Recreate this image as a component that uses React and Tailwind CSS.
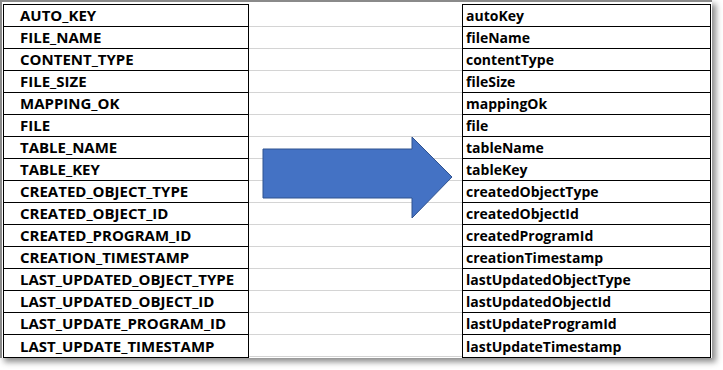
const fields = [
  ['AUTO_KEY', 'autoKey'],
  ['FILE_NAME', 'fileName'],
  ['CONTENT_TYPE', 'contentType'],
  ['FILE_SIZE', 'fileSize'],
  ['MAPPING_OK', 'mappingOk'],
  ['FILE', 'file'],
  ['TABLE_NAME', 'tableName'],
  ['TABLE_KEY', 'tableKey'],
  ['CREATED_OBJECT_TYPE', 'createdObjectType'],
  ['CREATED_OBJECT_ID', 'createdObjectId'],
  ['CREATED_PROGRAM_ID', 'createdProgramId'],
  ['CREATION_TIMESTAMP', 'creationTimestamp'],
  ['LAST_UPDATED_OBJECT_TYPE', 'lastUpdatedObjectType'],
  ['LAST_UPDATED_OBJECT_ID', 'lastUpdatedObjectId'],
  ['LAST_UPDATE_PROGRAM_ID', 'lastUpdateProgramId'],
  ['LAST_UPDATE_TIMESTAMP', 'lastUpdateTimestamp'],
];

const Arrow = () => (
  <svg
    className="absolute left-[260px] top-[134px]"
    width="192"
    height="84"
    viewBox="0 0 192 84"
  >
    <polygon
      points="1,13 150,13 150,1 190,41 150,82 150,62 1,62"
      fill="#4472c4"
      stroke="#2f528f"
      strokeWidth="1"
    />
  </svg>
);

const App = () => {
  return (
    <div className="w-[723px] h-[370px] bg-white overflow-hidden font-['Open_Sans',Arial,sans-serif] font-bold text-black">
      <div className="relative w-[712px] h-[358px] border-t-2 border-l-2 border-[#8a8a8a] bg-white pt-[2px] pl-[1px] shadow-[4px_4px_6px_rgba(0,0,0,0.45)]">
        <div className="flex">
          <div className="w-[246px] border border-black text-[15px]">
            {fields.map(([col], i) => (
              <div
                key={col}
                className={`h-[22px] flex items-center pl-[16px] ${i < fields.length - 1 ? 'border-b border-black' : 'h-[21px]'}`}
              >
                {col}
              </div>
            ))}
          </div>
          <div className="w-[213px] pt-[1px]">
            {fields.map(([col]) => (
              <div key={col} className="h-[22px] border-b border-[#d4d4d4]" />
            ))}
          </div>
          <div className="w-[249px] border border-black text-[14px]">
            {fields.map(([col, prop], i) => (
              <div
                key={prop}
                className={`h-[22px] flex items-center pl-[3px] ${i < fields.length - 1 ? 'border-b border-black' : 'h-[21px]'}`}
              >
                {prop}
              </div>
            ))}
          </div>
        </div>
        <Arrow />
      </div>
    </div>
  );
};

export default App;
